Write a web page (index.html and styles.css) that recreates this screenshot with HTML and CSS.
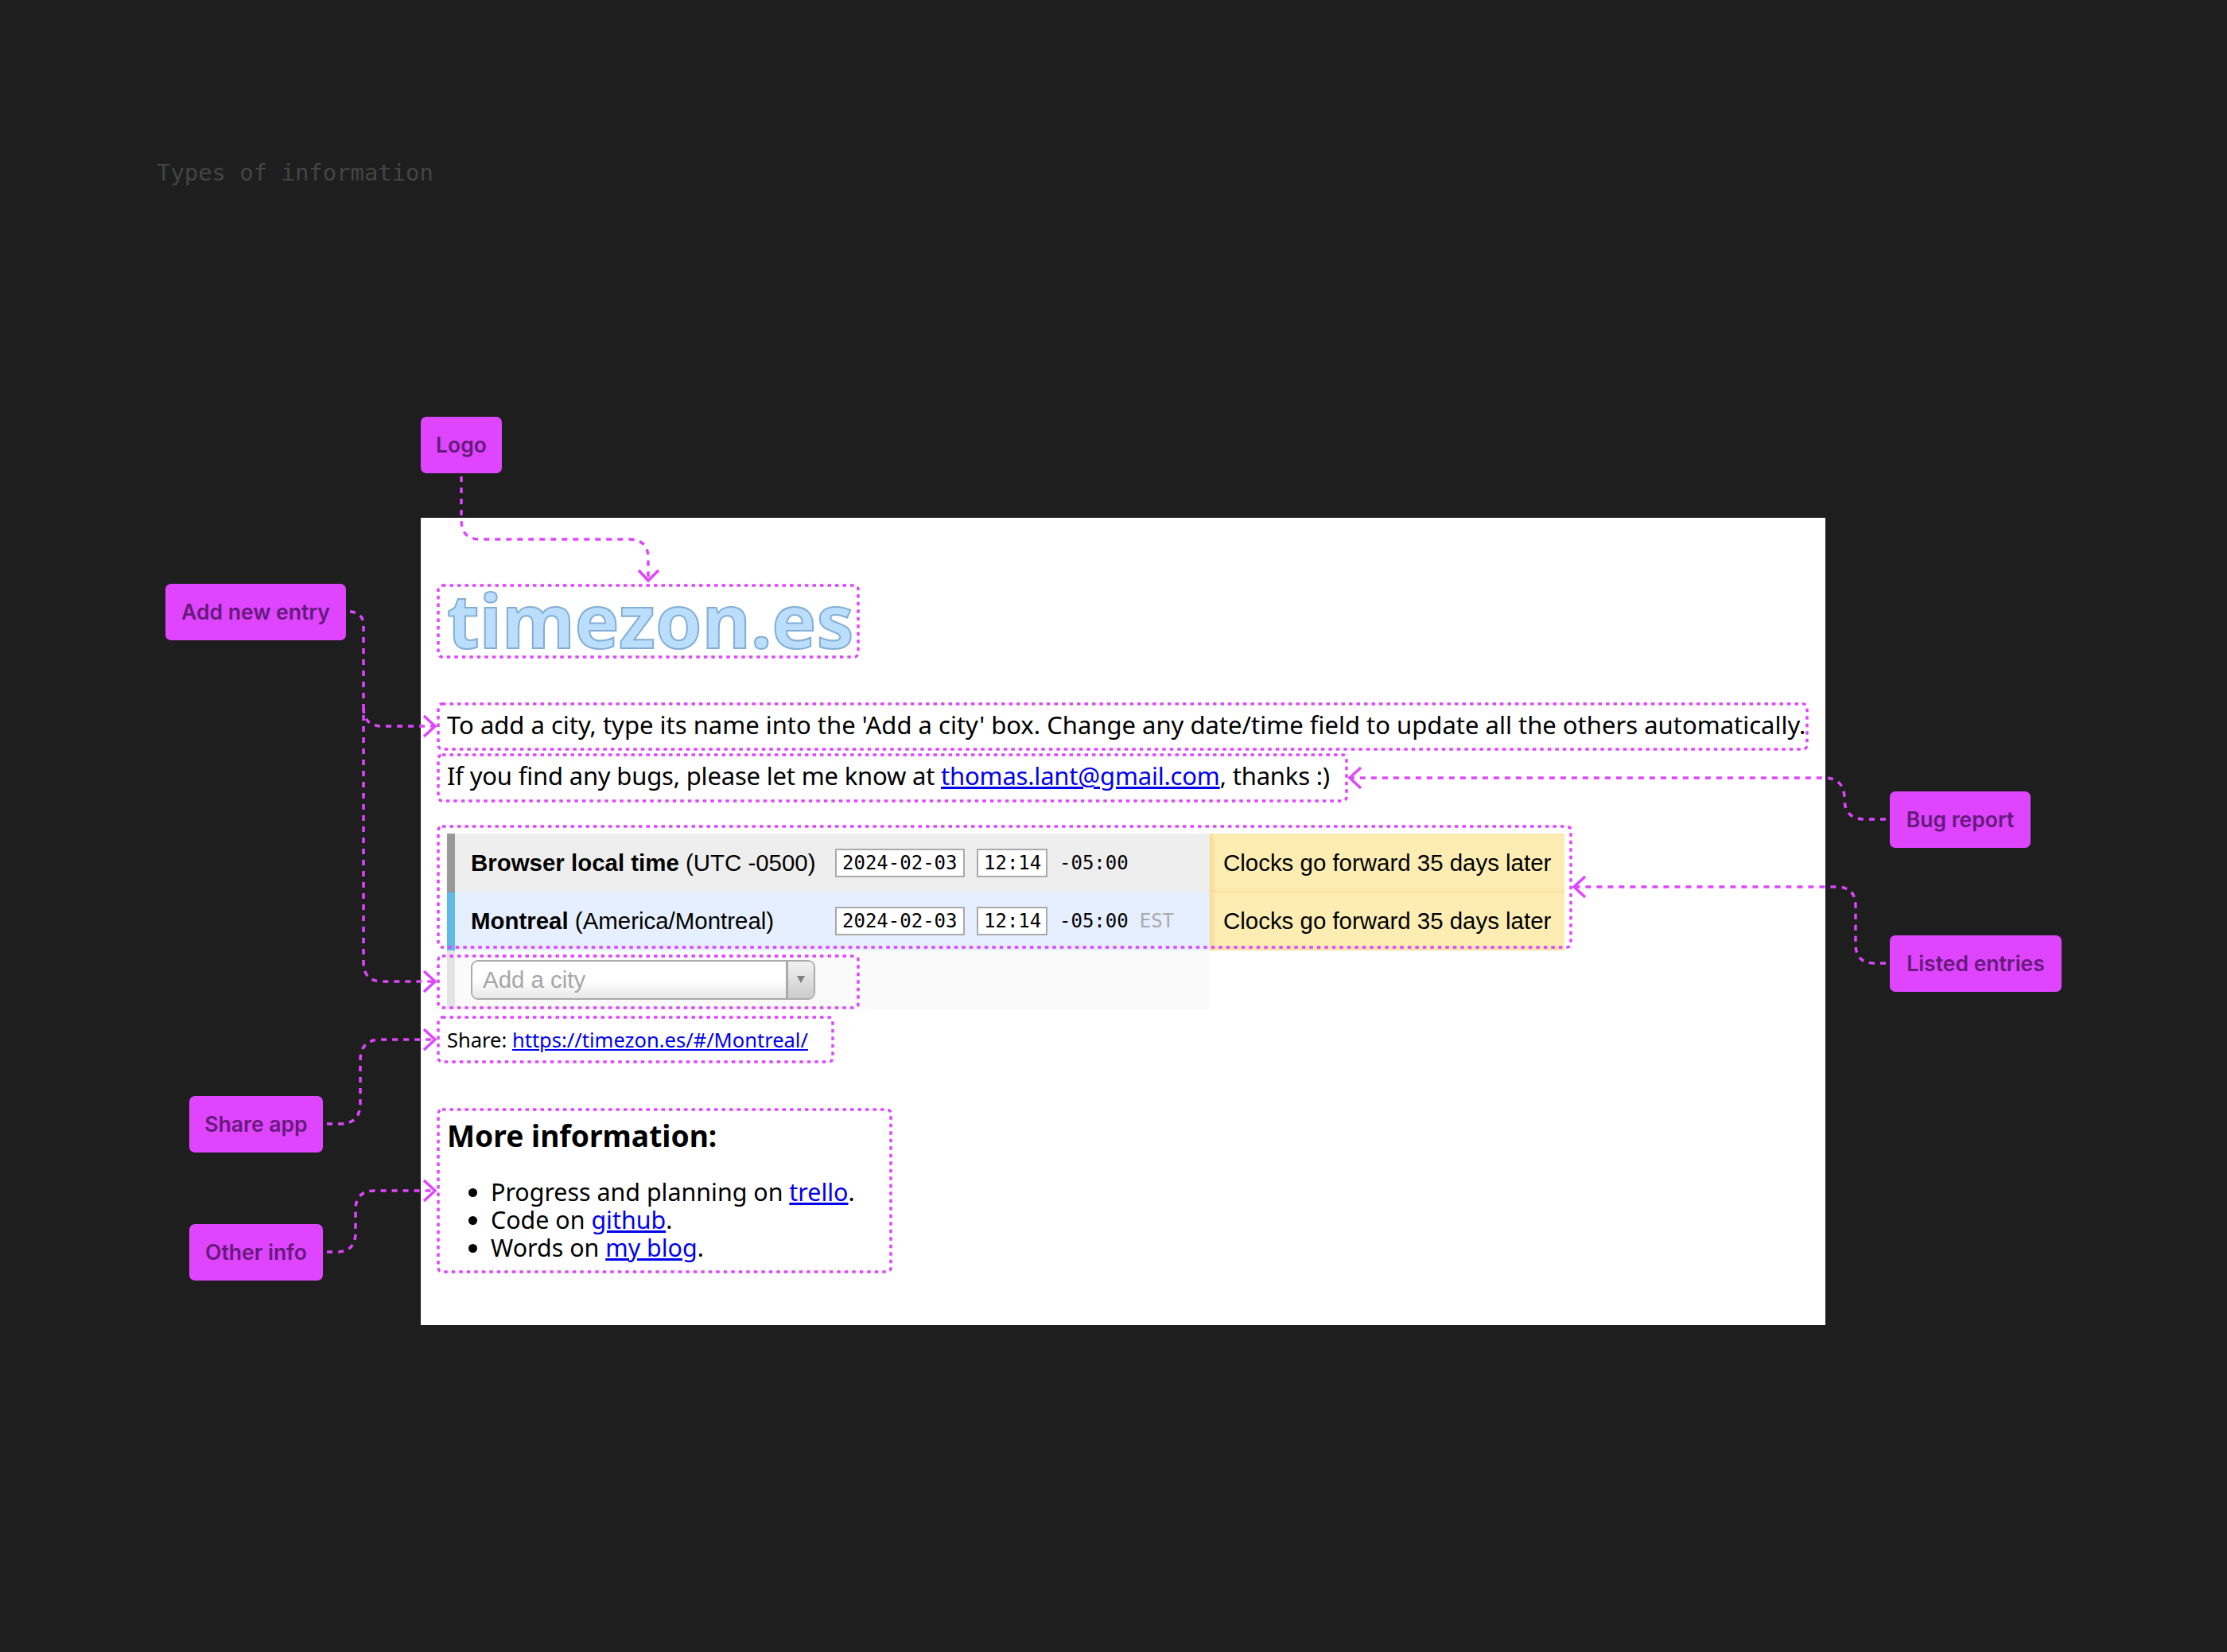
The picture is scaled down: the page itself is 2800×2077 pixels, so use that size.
FILE: index.html
```html
<!DOCTYPE html>
<html lang="en">
<head>
<meta charset="utf-8">
<title>Types of information</title>
<link rel="stylesheet" href="styles.css">
</head>
<body>
<div class="canvas">
  <div class="slide-title">Types of information</div>
  <main class="panel">
    <h1 class="logo">timezon.es</h1>
    <p class="intro">To add a city, type its name into the 'Add a city' box. Change any date/time field to update all the others automatically.</p>
    <p class="intro intro-tight">If you find any bugs, please let me know at <a href="#">thomas.lant@gmail.com</a>, thanks :)</p>
    <div class="entries">
      <div class="entry entry-local">
        <div class="bar"></div>
        <div class="main">
          <div class="name"><b>Browser local time</b> (UTC -0500)</div>
          <div class="field field-date">2024-02-03</div>
          <div class="field field-time">12:14</div>
          <div class="offset">-05:00</div>
        </div>
        <div class="note">Clocks go forward 35 days later</div>
      </div>
      <div class="entry entry-city">
        <div class="bar"></div>
        <div class="main">
          <div class="name"><b>Montreal</b> (America/Montreal)</div>
          <div class="field field-date">2024-02-03</div>
          <div class="field field-time">12:14</div>
          <div class="offset">-05:00</div>
          <div class="abbr">EST</div>
        </div>
        <div class="note">Clocks go forward 35 days later</div>
      </div>
      <div class="entry entry-add">
        <div class="bar"></div>
        <div class="main">
          <div class="combo">
            <div class="combo-input">Add a city</div>
            <div class="combo-btn"><span class="tri"></span></div>
          </div>
        </div>
      </div>
    </div>
    <p class="share">Share: <a href="#">https://timezon.es/#/Montreal/</a></p>
    <h2 class="more-title">More information:</h2>
    <ul class="more-list">
      <li>Progress and planning on <a href="#">trello</a>.</li>
      <li>Code on <a href="#">github</a>.</li>
      <li>Words on <a href="#">my blog</a>.</li>
    </ul>
  </main>

  <svg class="overlay" width="2800" height="2077" viewBox="0 0 2800 2077" aria-hidden="true">
    <g class="boxes">
      <rect x="551" y="736" width="528" height="90" rx="5"/>
      <rect x="551" y="885" width="1721" height="57" rx="5"/>
      <rect x="551" y="949" width="1142" height="58" rx="5"/>
      <rect x="551" y="1039" width="1424" height="152" rx="5"/>
      <rect x="551" y="1202" width="528" height="65" rx="5"/>
      <rect x="551" y="1279" width="496" height="56" rx="5"/>
      <rect x="551" y="1395" width="569" height="204" rx="5"/>
    </g>
    <g class="links">
      <path d="M580 599V654Q580 678 604 678H791Q815 678 815 702V730"/>
      <path d="M440 769H441Q457 771 457 786V1210Q457 1234 481 1234H545"/>
      <path d="M457 890Q457 913 481 913H545"/>
      <path d="M411 1413H427Q453 1413 453 1387V1333Q453 1307 479 1307H545"/>
      <path d="M411 1574H423Q447 1574 447 1550V1521Q447 1497 471 1497H545"/>
      <path d="M2371 1030H2345Q2319 1030 2319 1004Q2319 978 2293 978H1699"/>
      <path d="M2371 1211H2357Q2333 1211 2333 1187V1139Q2333 1115 2309 1115H1981"/>
    </g>
    <g class="heads">
      <path d="M803 717L815 730L828 717"/>
      <path d="M533 900L547 913L533 926"/>
      <path d="M533 1221L547 1234L533 1247"/>
      <path d="M533 1294L547 1307L533 1320"/>
      <path d="M533 1484L547 1497L533 1510"/>
      <path d="M1711 965L1697 978L1711 991"/>
      <path d="M1993 1102L1979 1115L1993 1128"/>
    </g>
  </svg>

  <div class="tag tag-logo">Logo</div>
  <div class="tag tag-add">Add new entry</div>
  <div class="tag tag-share">Share app</div>
  <div class="tag tag-other">Other info</div>
  <div class="tag tag-bug">Bug report</div>
  <div class="tag tag-listed">Listed entries</div>
</div>
</body>
</html>
```

FILE: styles.css
```css
* { box-sizing: border-box; }
html, body { margin: 0; padding: 0; }
body { background: #1e1e1e; }
.canvas {
  position: relative;
  width: 2800px;
  height: 2077px;
  padding: 197px 0 0 197px;
  overflow: hidden;
}
.slide-title {
  font: 400 28.9px/40px "DejaVu Sans Mono", monospace;
  color: #444444;
  height: 40px;
}
.panel {
  margin: 414px 0 0 332px;
  width: 1766px;
  height: 1015px;
  background: #ffffff;
  padding: 0 0 0 33px;
  font-family: "Noto Sans", sans-serif;
  color: #000000;
  overflow: hidden;
}
a { color: #0000ee; text-decoration: underline; }
.logo {
  margin: 68px 0 0;
  height: 160px;
  font: 700 94px/120px "Noto Sans", sans-serif;
  color: #bbdefd;
  -webkit-text-stroke: 2px #82aed6;
}
.intro {
  margin: 0;
  height: 64px;
  font-size: 31px;
  line-height: 64px;
  white-space: nowrap;
}
.intro-tight { letter-spacing: -0.19px; }
.entries { margin-top: 41px; font-family: "Liberation Sans", sans-serif; font-size: 29.44px; }
.entry { display: flex; height: 73.5px; }
.bar { width: 10px; flex: none; }
.main {
  width: 949px;
  flex: none;
  display: flex;
  align-items: center;
  padding-left: 20px;
}
.name { width: 458px; flex: none; white-space: nowrap; }
.field {
  height: 36px;
  border: 2px solid #aaaaaa;
  background: #ffffff;
  font: 400 24px/32px "DejaVu Sans Mono", monospace;
  padding-left: 7px;
  flex: none;
}
.field-date { width: 163px; margin-right: 15px; }
.field-time { width: 89px; margin-right: 15px; }
.offset { font: 400 24px/32px "DejaVu Sans Mono", monospace; margin-right: 14px; }
.abbr { font: 400 24px/32px "DejaVu Sans Mono", monospace; color: #aaaaaa; }
.note {
  width: 446px;
  flex: none;
  display: flex;
  align-items: center;
  padding-left: 17px;
  white-space: nowrap;
  background: #fdedb2;
  box-shadow: inset 7px 0 7px -4px #f7d68c, inset 0 -6px 6px -5px #f7dc9c;
}
.entry-local .bar { background: #999999; }
.entry-local .main { background: #eeeeee; }
.entry-city .bar { background: #60b9e9; }
.entry-city .main { background: #e5efff; }
.entry-add .bar { background: #e3e3e3; }
.entry-add .main { background: #fafafa; }
.combo {
  width: 433px;
  height: 50px;
  display: flex;
  border: 2px solid #aaaaaa;
  border-radius: 9px;
  overflow: hidden;
}
.combo-input {
  flex: 1;
  padding-left: 13px;
  color: #a6a6a6;
  line-height: 46px;
  background: linear-gradient(#ffffff 50%, #e8e8e8);
}
.combo-btn {
  width: 35px;
  flex: none;
  border-left: 3px solid #aaaaaa;
  background: linear-gradient(#f2f2f2, #cccccc);
  display: flex;
  align-items: center;
  justify-content: center;
}
.tri {
  width: 0;
  height: 0;
  border-left: 5px solid transparent;
  border-right: 5px solid transparent;
  border-top: 9px solid #808080;
}
.share {
  margin: 0;
  height: 62px;
  padding-top: 18px;
  font-size: 25.5px;
  line-height: 40px;
  white-space: nowrap;
}
.more-title {
  margin: 63px 0 0;
  height: 58px;
  padding-top: 10px;
  font-size: 37.2px;
  line-height: 48px;
  font-weight: 700;
  white-space: nowrap;
}
.more-list {
  margin: 29px 0 0;
  padding: 0 0 0 55px;
  font-size: 30.4px;
  line-height: 35px;
}
.overlay { position: absolute; left: 0; top: 0; pointer-events: none; }
.boxes rect { fill: none; stroke: #df45ff; stroke-width: 3.5px; stroke-dasharray: 4.5 5; }
.links path { fill: none; stroke: #df45ff; stroke-width: 3.5px; stroke-dasharray: 7 7; }
.heads path { fill: none; stroke: #df45ff; stroke-width: 3.5px; }
.tag {
  position: absolute;
  height: 71px;
  border-radius: 7px;
  background: #df45ff;
  color: #661a7a;
  font: 600 26.5px/71px Inter, sans-serif;
  text-align: center;
  white-space: nowrap;
}
.tag-logo { left: 529px; top: 524px; width: 102px; }
.tag-add { left: 208px; top: 734px; width: 227px; }
.tag-share { left: 238px; top: 1378px; width: 168px; }
.tag-other { left: 238px; top: 1539px; width: 168px; }
.tag-bug { left: 2376px; top: 995px; width: 177px; }
.tag-listed { left: 2376px; top: 1176px; width: 216px; }
```
